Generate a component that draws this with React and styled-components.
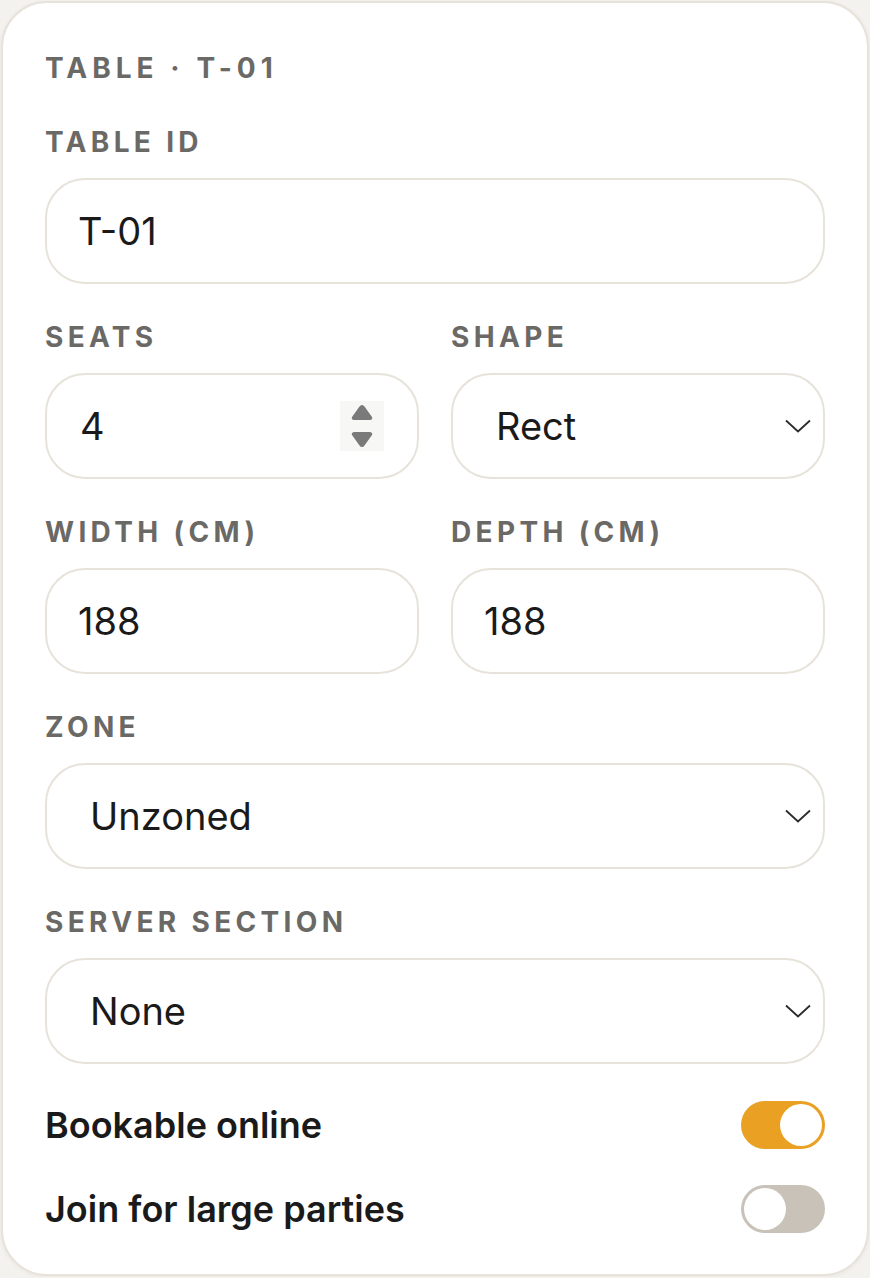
import React from "react";
import styled, { createGlobalStyle } from "styled-components";

const Global = createGlobalStyle`
  html, body { margin: 0; padding: 0; background: #f4f2ee; }
  body { font-family: Inter, "Noto Sans", sans-serif; }
  * { box-sizing: border-box; }
`;

const Page = styled.div`
  padding: 1px;
`;

const Card = styled.section`
  background: #ffffff;
  border: 2px solid #e7e3db;
  border-radius: 46px;
  padding: 47px 42px 41px;
  display: flex;
  flex-direction: column;
  gap: 35px;
  box-shadow: 0 1px 4px rgba(60, 50, 30, 0.06);
`;

const Title = styled.h2`
  margin: 0 0 3px;
  font-size: 28px;
  line-height: 36px;
  font-weight: 700;
  letter-spacing: 0.18em;
  color: #6b6966;
  text-transform: uppercase;
`;

const Field = styled.div`
  display: flex;
  flex-direction: column;
  gap: 17px;
  min-width: 0;
`;

const Label = styled.label`
  font-size: 28px;
  line-height: 37px;
  font-weight: 700;
  letter-spacing: 0.155em;
  color: #6b6966;
  text-transform: uppercase;
`;

const Row = styled.div`
  display: grid;
  grid-template-columns: 1fr 1fr;
  gap: 32px;
`;

const Box = styled.div`
  position: relative;
  height: 106px;
  border: 2px solid #e7e3db;
  border-radius: 40px;
  background: #fff;
  display: flex;
  align-items: center;
  padding: 0 31px;
`;

const TextInput = styled.input`
  flex: 1;
  min-width: 0;
  border: 0;
  outline: none;
  background: transparent;
  padding: 0 0 0 ${(p) => p.$indent || 0}px;
  font-family: Inter, "Noto Sans", sans-serif;
  font-size: 38px;
  color: #1a1a1a;
`;

const Select = styled.select`
  appearance: none;
  -webkit-appearance: none;
  flex: 1;
  min-width: 0;
  border: 0;
  outline: none;
  background: transparent;
  padding: 0 0 0 12px;
  font-family: Inter, "Noto Sans", sans-serif;
  font-size: 38px;
  color: #1a1a1a;
`;

const Chevron = styled.svg`
  position: absolute;
  right: 12px;
  top: 50%;
  margin-top: -7px;
  pointer-events: none;
`;

const Spinner = styled.svg`
  flex: none;
  margin-right: 2px;
`;

const ToggleRow = styled.div`
  display: flex;
  align-items: center;
  justify-content: space-between;
  height: 48px;
  margin-top: ${(p) => (p.$first ? "2px" : "1px")};
`;

const ToggleText = styled.span`
  font-size: 36px;
  font-weight: 600;
  color: #1a1a1a;
`;

const Track = styled.button`
  width: 84px;
  height: 48px;
  border-radius: 24px;
  border: 0;
  padding: 3px;
  background: ${(p) => (p.$on ? "#e9a023" : "#c8c2b9")};
  display: flex;
  justify-content: ${(p) => (p.$on ? "flex-end" : "flex-start")};
  cursor: pointer;
`;

const Knob = styled.span`
  width: 42px;
  height: 42px;
  border-radius: 50%;
  background: #fff;
`;

const ChevronIcon = () => (
  <Chevron width="26" height="14" viewBox="0 0 26 14">
    <path d="M1 1.5 L13 12.5 L25 1.5" fill="none" stroke="#2b2b2b" strokeWidth="1.8" />
  </Chevron>
);

const SpinIcon = () => (
  <Spinner width="44" height="50" viewBox="0 0 44 50">
    <rect x="0" y="0" width="44" height="50" fill="#f7f7f6" />
    <path d="M22 4 Q23.5 4 24.5 5.5 L32 16 Q33 18.5 30 19 L14 19 Q11 18.5 12 16 L19.5 5.5 Q20.5 4 22 4 Z" fill="#7a7a7a" />
    <path d="M22 46 Q23.5 46 24.5 44.5 L32 34 Q33 31.5 30 31 L14 31 Q11 31.5 12 34 L19.5 44.5 Q20.5 46 22 46 Z" fill="#7a7a7a" />
  </Spinner>
);

const Toggle = ({ on }) => (
  <Track $on={on} type="button" aria-pressed={on}>
    <Knob />
  </Track>
);

export default function App() {
  return (
    <Page>
      <Global />
      <Card>
        <Title>Table · T-01</Title>
        <Field>
          <Label>Table ID</Label>
          <Box>
            <TextInput defaultValue="T-01" />
          </Box>
        </Field>
        <Row>
          <Field>
            <Label>Seats</Label>
            <Box>
              <TextInput defaultValue="4" $indent={2} />
              <SpinIcon />
            </Box>
          </Field>
          <Field>
            <Label>Shape</Label>
            <Box>
              <Select defaultValue="Rect">
                <option>Rect</option>
                <option>Round</option>
                <option>Square</option>
              </Select>
              <ChevronIcon />
            </Box>
          </Field>
        </Row>
        <Row>
          <Field>
            <Label>Width (cm)</Label>
            <Box>
              <TextInput defaultValue="188" />
            </Box>
          </Field>
          <Field>
            <Label>Depth (cm)</Label>
            <Box>
              <TextInput defaultValue="188" />
            </Box>
          </Field>
        </Row>
        <Field>
          <Label>Zone</Label>
          <Box>
            <Select defaultValue="Unzoned">
              <option>Unzoned</option>
              <option>Patio</option>
              <option>Main hall</option>
            </Select>
            <ChevronIcon />
          </Box>
        </Field>
        <Field>
          <Label>Server section</Label>
          <Box>
            <Select defaultValue="None">
              <option>None</option>
              <option>Section A</option>
              <option>Section B</option>
            </Select>
            <ChevronIcon />
          </Box>
        </Field>
        <ToggleRow $first>
          <ToggleText>Bookable online</ToggleText>
          <Toggle on />
        </ToggleRow>
        <ToggleRow>
          <ToggleText>Join for large parties</ToggleText>
          <Toggle on={false} />
        </ToggleRow>
      </Card>
    </Page>
  );
}
